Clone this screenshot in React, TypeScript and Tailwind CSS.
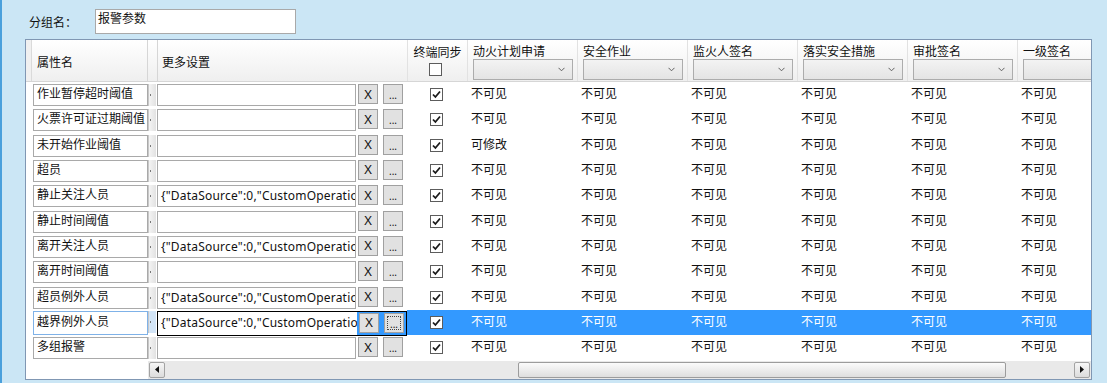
import React from "react";

const FONT = '"Noto Sans", "Noto Sans CJK SC", sans-serif';

type Row = { name: string; more: string; vis: string[] };

const J = '{"DataSource":0,"CustomOperation":null}';
const inv = ["不可见", "不可见", "不可见", "不可见", "不可见", "不可见"];
const rows: Row[] = [
  { name: "作业暂停超时阈值", more: "", vis: inv },
  { name: "火票许可证过期阈值", more: "", vis: inv },
  { name: "未开始作业阈值", more: "", vis: ["可修改", "不可见", "不可见", "不可见", "不可见", "不可见"] },
  { name: "超员", more: "", vis: inv },
  { name: "静止关注人员", more: J, vis: inv },
  { name: "静止时间阈值", more: "", vis: inv },
  { name: "离开关注人员", more: J, vis: inv },
  { name: "离开时间阈值", more: "", vis: inv },
  { name: "超员例外人员", more: J, vis: inv },
  { name: "越界例外人员", more: J, vis: inv },
  { name: "多组报警", more: "", vis: inv },
];
const SELECTED = 9;

const visCols = ["动火计划申请", "安全作业", "监火人签名", "落实安全措施", "审批签名", "一级签名"];

function Check({ checked }: { checked: boolean }) {
  return (
    <div className="w-[13px] h-[13px] border border-[#5c5c5c] bg-white flex items-center justify-center">
      {checked && (
        <svg width="9" height="9" viewBox="0 0 9 9">
          <path d="M1 4.5 L3.4 7 L8 1.5" fill="none" stroke="#1a1a1a" strokeWidth="1.8" />
        </svg>
      )}
    </div>
  );
}

function Chevron() {
  return (
    <svg width="7" height="5" viewBox="0 0 7 5">
      <path d="M0.5 0.8 L3.5 3.8 L6.5 0.8" fill="none" stroke="#606060" strokeWidth="1" />
    </svg>
  );
}

export default function App() {
  return (
    <div
      className="w-[1107px] h-[383px] bg-[#cbe6f5] border-l-2 border-[#4aa0dc] overflow-hidden text-[12px] text-[#111]"
      style={{ fontFamily: FONT }}
    >
      <div className="flex items-start pt-[9px]">
        <div className="w-[93px] pl-[27px] pt-[6px] leading-[16px]">分组名：</div>
        <div className="w-[201px] h-[25px] bg-white border border-[#a9a9a9] pl-[2px] leading-[16px] pt-[1px]">
          报警参数
        </div>
      </div>

      <div className="mt-[5px] ml-[23px] w-[1067px] h-[341px] border border-[#8097b3] bg-white flex flex-col overflow-hidden">
        {/* header */}
        <div className="flex h-[42px] shrink-0 bg-gradient-to-b from-white to-[#efefef] border-b border-[#d6d6d6]">
          <div className="w-[6px] shrink-0 border-r border-[#dadada] bg-[#f0f0f0]" />
          <div className="w-[116px] shrink-0 border-r border-[#d6d6d6] flex items-center pl-[5px] pt-[4px]">属性名</div>
          <div className="w-[10px] shrink-0 border-r border-[#d6d6d6]" />
          <div className="w-[250px] shrink-0 border-r border-[#e2e2e2] flex items-center pl-[4px] pt-[4px]">更多设置</div>
          <div className="w-[60px] shrink-0 border-r border-[#e2e2e2] flex flex-col items-center pt-[5px]">
            <div className="leading-[16px]">终端同步</div>
            <div className="mt-[2px] mr-[4px]">
              <Check checked={false} />
            </div>
          </div>
          {visCols.map((c) => (
            <div key={c} className="w-[110px] shrink-0 border-r border-[#e2e2e2] pl-[5px] pt-[5px]">
              <div className="leading-[14px] h-[14px] whitespace-nowrap">{c}</div>
              <div className="mt-[0px] w-[100px] h-[21px] border border-[#acacac] bg-gradient-to-b from-[#f3f3f3] to-[#e4e4e4] flex items-center justify-end pr-[7px]">
                <Chevron />
              </div>
            </div>
          ))}
        </div>

        {/* rows */}
        <div className="flex flex-col">
          {rows.map((r, i) => {
            const sel = i === SELECTED;
            return (
              <div key={i} className="flex h-[25.33px] shrink-0">
                <div className="w-[7px] shrink-0" />
                <div className={"w-[115px] shrink-0 " + (sel ? "pt-[1px]" : "pt-[2px]")}>
                  <div
                    className={
                      "bg-white border pl-[3px] leading-[16px] overflow-hidden whitespace-nowrap " +
                      (sel ? "h-[24px] border-[#7fb2e8] pt-[2px]" : "h-[22px] border-[#a9a9a9] pt-[1px]")
                    }
                  >
                    {r.name}
                  </div>
                </div>
                <div className={"w-[9px] shrink-0 " + (sel ? "pt-[1px]" : "pt-[2px]")}>
                  <div
                    className={
                      "w-[8px] h-[22px] border-l border-[#c8c8c8] flex items-center pl-[1px] " +
                      (sel ? "bg-[#d3e5f7]" : "bg-gradient-to-r from-[#f4f4f4] to-[#e2e2e2]")
                    }
                  >
                    <div className="w-[1px] h-[2px] bg-[#777]" />
                  </div>
                </div>
                <div
                  className={
                    "w-[250px] shrink-0 flex items-start " +
                    (sel ? "border border-black bg-[#3399ff] h-[25px] mt-[1px]" : "pt-[2px]")
                  }
                >
                  <div
                    className={
                      "w-[199px] shrink-0 bg-white pl-[3px] leading-[16px] overflow-hidden whitespace-nowrap tracking-[0.2px] " +
                      (sel ? "h-[23px] pt-[3px]" : "h-[22px] border border-[#a9a9a9] pt-[2px]")
                    }
                  >
                    {r.more}
                  </div>
                  <div
                    className={
                      "ml-[2px] w-[20px] h-[20px] shrink-0 bg-[#e1e1e1] border border-[#a0a0a0] flex items-center justify-center text-[13px] leading-none " +
                      (sel ? "mt-[1px]" : "mt-0")
                    }
                  >
                    X
                  </div>
                  <div
                    className={
                      "ml-[5px] w-[20px] h-[20px] shrink-0 bg-[#e1e1e1] border border-[#a0a0a0] flex items-end justify-center text-[10px] leading-none pb-[3px] " +
                      (sel ? "mt-[1px] outline outline-1 outline-dotted outline-[#444] outline-offset-[-4px]" : "mt-0")
                    }
                  >
                    ...
                  </div>
                </div>
                <div
                  className={
                    "w-[60px] shrink-0 flex items-start justify-center pt-[6px] pr-[2px] " + (sel ? "bg-[#3399ff]" : "")
                  }
                >
                  <Check checked={true} />
                </div>
                {r.vis.map((v, k) => (
                  <div
                    key={k}
                    className={
                      "w-[110px] shrink-0 pl-[4px] pt-[4px] leading-[16px] whitespace-nowrap " +
                      (sel ? "bg-[#3399ff] text-white" : "")
                    }
                  >
                    {v}
                  </div>
                ))}
              </div>
            );
          })}
        </div>

        {/* horizontal scrollbar */}
        <div className="flex flex-1 min-h-0">
          <div className="w-[122px] shrink-0 bg-white" />
          <div className="flex-1 bg-[#e9e9e9] flex items-center py-[1px]">
            <div className="w-[16px] h-[16px] ml-[1px] rounded-[2px] border border-[#a3a3a3] bg-gradient-to-b from-[#f6f6f6] to-[#dcdcdc] flex items-center justify-center">
              <svg width="4" height="7" viewBox="0 0 4 7">
                <path d="M4 0 L0 3.5 L4 7 Z" fill="#111" />
              </svg>
            </div>
            <div className="w-[353px] shrink-0" />
            <div className="w-[488px] h-[16px] rounded-[2px] border border-[#9c9c9c] bg-gradient-to-b from-[#fbfbfb] to-[#dedede]" />
            <div className="flex-1" />
            <div className="w-[16px] h-[16px] mr-[1px] rounded-[2px] border border-[#a3a3a3] bg-gradient-to-b from-[#f6f6f6] to-[#dcdcdc] flex items-center justify-center">
              <svg width="4" height="7" viewBox="0 0 4 7">
                <path d="M0 0 L4 3.5 L0 7 Z" fill="#111" />
              </svg>
            </div>
          </div>
        </div>
      </div>
    </div>
  );
}
